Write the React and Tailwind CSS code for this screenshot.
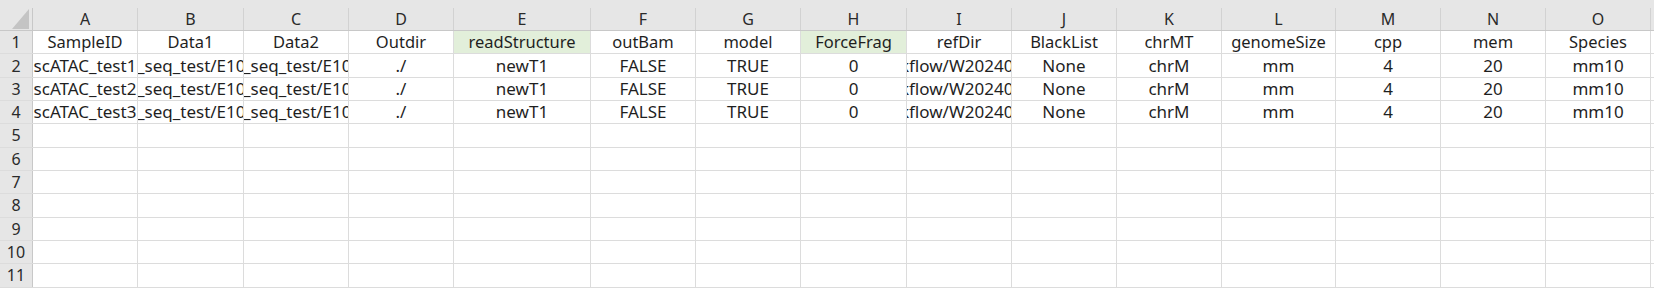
import React from "react";

const columns = [
  { letter: "A", width: "w-[105px]" },
  { letter: "B", width: "w-[106px]" },
  { letter: "C", width: "w-[105px]" },
  { letter: "D", width: "w-[105px]" },
  { letter: "E", width: "w-[137px]" },
  { letter: "F", width: "w-[105px]" },
  { letter: "G", width: "w-[105px]" },
  { letter: "H", width: "w-[106px]" },
  { letter: "I", width: "w-[105px]" },
  { letter: "J", width: "w-[105px]" },
  { letter: "K", width: "w-[105px]" },
  { letter: "L", width: "w-[114px]" },
  { letter: "M", width: "w-[105px]" },
  { letter: "N", width: "w-[105px]" },
  { letter: "O", width: "w-[105px]" },
];

const headers = [
  "SampleID",
  "Data1",
  "Data2",
  "Outdir",
  "readStructure",
  "outBam",
  "model",
  "ForceFrag",
  "refDir",
  "BlackList",
  "chrMT",
  "genomeSize",
  "cpp",
  "mem",
  "Species",
];

// cells that hold a long path are clipped, shift is how far the text starts before the cell
const clipped = {
  1: { text: "_seq_test/E1000", shift: "-ml-[1px]" },
  2: { text: "_seq_test/E1000", shift: "-ml-[1px]" },
  8: { text: "kflow/W20240101", shift: "-ml-[7px]" },
};

const makeRow = (n) => [
  `scATAC_test${n}`,
  "",
  "",
  "./",
  "newT1",
  "FALSE",
  "TRUE",
  "0",
  "",
  "None",
  "chrM",
  "mm",
  "4",
  "20",
  "mm10",
];

const green = [4, 7];

const Cell = ({ col, index, children, className = "" }) => {
  const clip = clipped[index];
  return (
    <div
      className={`${col.width} shrink-0 h-full border-r border-[#dcdcdc] overflow-hidden flex items-center ${
        clip && !children ? "justify-start" : "justify-center"
      } whitespace-nowrap ${className}`}
    >
      {clip && !children ? (
        <span className={`${clip.shift} shrink-0`}>{clip.text}</span>
      ) : (
        <span className="shrink-0">{children}</span>
      )}
    </div>
  );
};

const App = () => {
  const dataRows = [makeRow(1), makeRow(2), makeRow(3)];
  const emptyRows = [5, 6, 7, 8, 9, 10, 11];

  return (
    <div
      className="w-[1654px] h-[291px] overflow-hidden bg-white text-[#1f1f1f]"
      style={{ fontFamily: '"Noto Sans", "Liberation Sans", sans-serif' }}
    >
      {/* top band */}
      <div className="h-[8px] bg-[#e6e6e6]" />

      {/* column letters */}
      <div className="flex h-[23px] bg-[#e6e6e6] border-b border-[#c8c8c8] text-[16px] text-[#2a2a2a]">
        <div className="w-[33px] shrink-0 h-full border-r border-[#c8c8c8] relative">
          <svg className="absolute left-0 top-0" width="33" height="23" viewBox="0 0 33 23">
            <polygon points="12,21 29,21 29,1" fill="#c4c4c4" />
          </svg>
        </div>
        {columns.map((col) => (
          <div
            key={col.letter}
            className={`${col.width} shrink-0 h-full border-r border-[#d2d2d2] flex items-center justify-center`}
          >
            {col.letter}
          </div>
        ))}
        <div className="flex-1" />
      </div>

      {/* row 1 */}
      <div className="flex h-[23.33px] border-b border-[#dcdcdc] text-[16.5px]">
        <div className="w-[33px] shrink-0 h-full bg-[#e6e6e6] border-r border-[#c8c8c8] flex items-center justify-center text-[16px] text-[#2a2a2a]">
          1
        </div>
        {columns.map((col, i) => (
          <Cell
            key={col.letter}
            col={col}
            index={-1}
            className={green.includes(i) ? "bg-[#e2efda]" : ""}
          >
            {headers[i]}
          </Cell>
        ))}
        <div className="flex-1" />
      </div>

      {/* data rows */}
      {dataRows.map((row, r) => (
        <div key={r} className="flex h-[23.33px] border-b border-[#dcdcdc] text-[17px]">
          <div className="w-[33px] shrink-0 h-full bg-[#e6e6e6] border-r border-[#c8c8c8] flex items-center justify-center text-[16px] text-[#2a2a2a]">
            {r + 2}
          </div>
          {columns.map((col, i) => (
            <Cell key={col.letter} col={col} index={i}>
              {row[i]}
            </Cell>
          ))}
          <div className="flex-1" />
        </div>
      ))}

      {/* empty rows */}
      {emptyRows.map((n) => (
        <div key={n} className="flex h-[23.33px] border-b border-[#dcdcdc]">
          <div className="w-[33px] shrink-0 h-full bg-[#e6e6e6] border-r border-[#c8c8c8] flex items-center justify-center text-[16px] text-[#2a2a2a]">
            {n}
          </div>
          {columns.map((col) => (
            <div key={col.letter} className={`${col.width} shrink-0 h-full border-r border-[#dcdcdc]`} />
          ))}
          <div className="flex-1" />
        </div>
      ))}
    </div>
  );
};

export default App;
